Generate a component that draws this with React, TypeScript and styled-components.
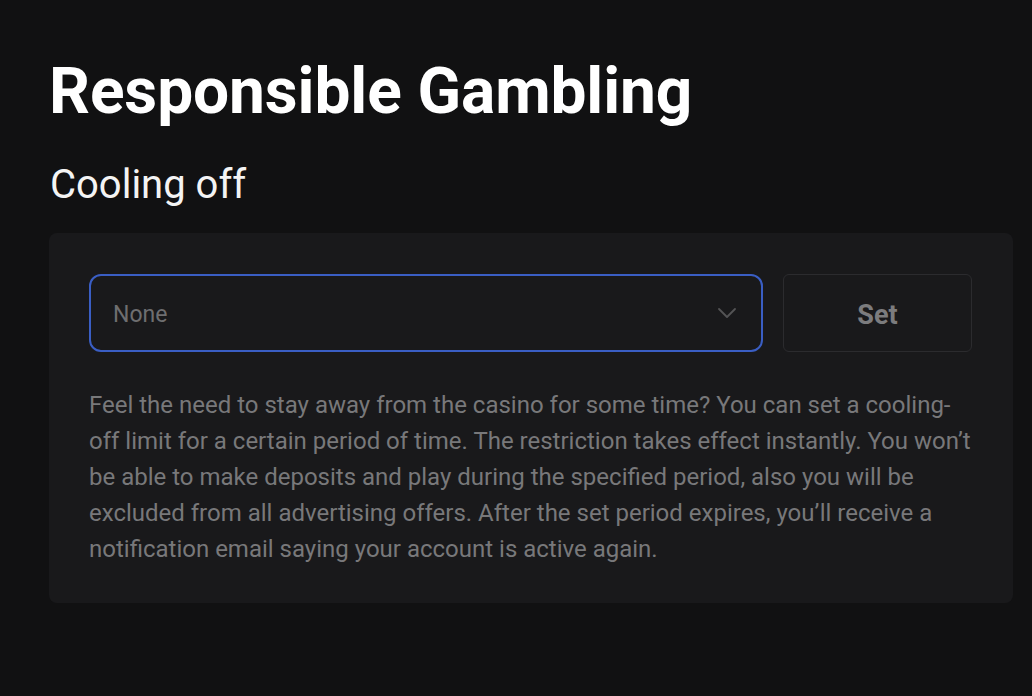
import { createGlobalStyle } from "styled-components";
import styled from "styled-components";

const GlobalStyle = createGlobalStyle`
  html, body {
    margin: 0;
    padding: 0;
    background: #111112;
  }
  body {
    font-family: Roboto, "Liberation Sans", Arial, sans-serif;
    width: 1032px;
    height: 696px;
    overflow: hidden;
  }
`;

const Page = styled.main`
  padding: 54px 19px 0 49px;
  display: flex;
  flex-direction: column;
`;

const Title = styled.h1`
  margin: 0;
  font-size: 64px;
  line-height: 76px;
  font-weight: 700;
  color: #ffffff;
  letter-spacing: -0.1px;
`;

const SubTitle = styled.h2`
  margin: 31px 0 0 1px;
  font-size: 40px;
  line-height: 48px;
  font-weight: 400;
  color: #f4f4f4;
`;

const Panel = styled.section`
  margin-top: 24px;
  background: #19191b;
  border-radius: 8px;
  padding: 41px 41px 36px 40px;
  display: flex;
  flex-direction: column;
  gap: 35px;
`;

const Row = styled.div`
  display: flex;
  gap: 20px;
`;

const Select = styled.div`
  flex: 1;
  height: 78px;
  box-sizing: border-box;
  border: 2px solid #3a5ec4;
  border-radius: 12px;
  display: flex;
  align-items: center;
  justify-content: space-between;
  padding: 3px 24px 0 22px;
  color: #6e6e70;
  font-size: 23px;
`;

const Chevron = styled.svg`
  width: 20px;
  height: 12px;
  margin-bottom: 3px;
  color: #545456;
`;

const SetButton = styled.button`
  width: 189px;
  height: 78px;
  box-sizing: border-box;
  padding: 4px 0 0;
  background: transparent;
  border: 1px solid #2b2b2e;
  border-radius: 6px;
  color: #7c7c7e;
  font-family: inherit;
  font-size: 27px;
  font-weight: 700;
  cursor: pointer;
`;

const Note = styled.p`
  margin: 0;
  font-size: 24px;
  line-height: 36px;
  color: #78787a;
`;

export default function App() {
  return (
    <>
      <GlobalStyle />
      <Page>
        <Title>Responsible Gambling</Title>
        <SubTitle>Cooling off</SubTitle>
        <Panel>
          <Row>
            <Select>
              <span>None</span>
              <Chevron viewBox="0 0 20 12" fill="none">
                <path d="M2 2l8 8 8-8" stroke="currentColor" strokeWidth="1.8" strokeLinecap="round" strokeLinejoin="round" />
              </Chevron>
            </Select>
            <SetButton>Set</SetButton>
          </Row>
          <Note>
            Feel the need to stay away from the casino for some time? You can set a cooling-off limit for a certain
            period of time. The restriction takes effect instantly. You won’t be able to make deposits and play during
            the specified period, also you will be excluded from all advertising offers. After the set period expires,
            you’ll receive a notification email saying your account is active again.
          </Note>
        </Panel>
      </Page>
    </>
  );
}
